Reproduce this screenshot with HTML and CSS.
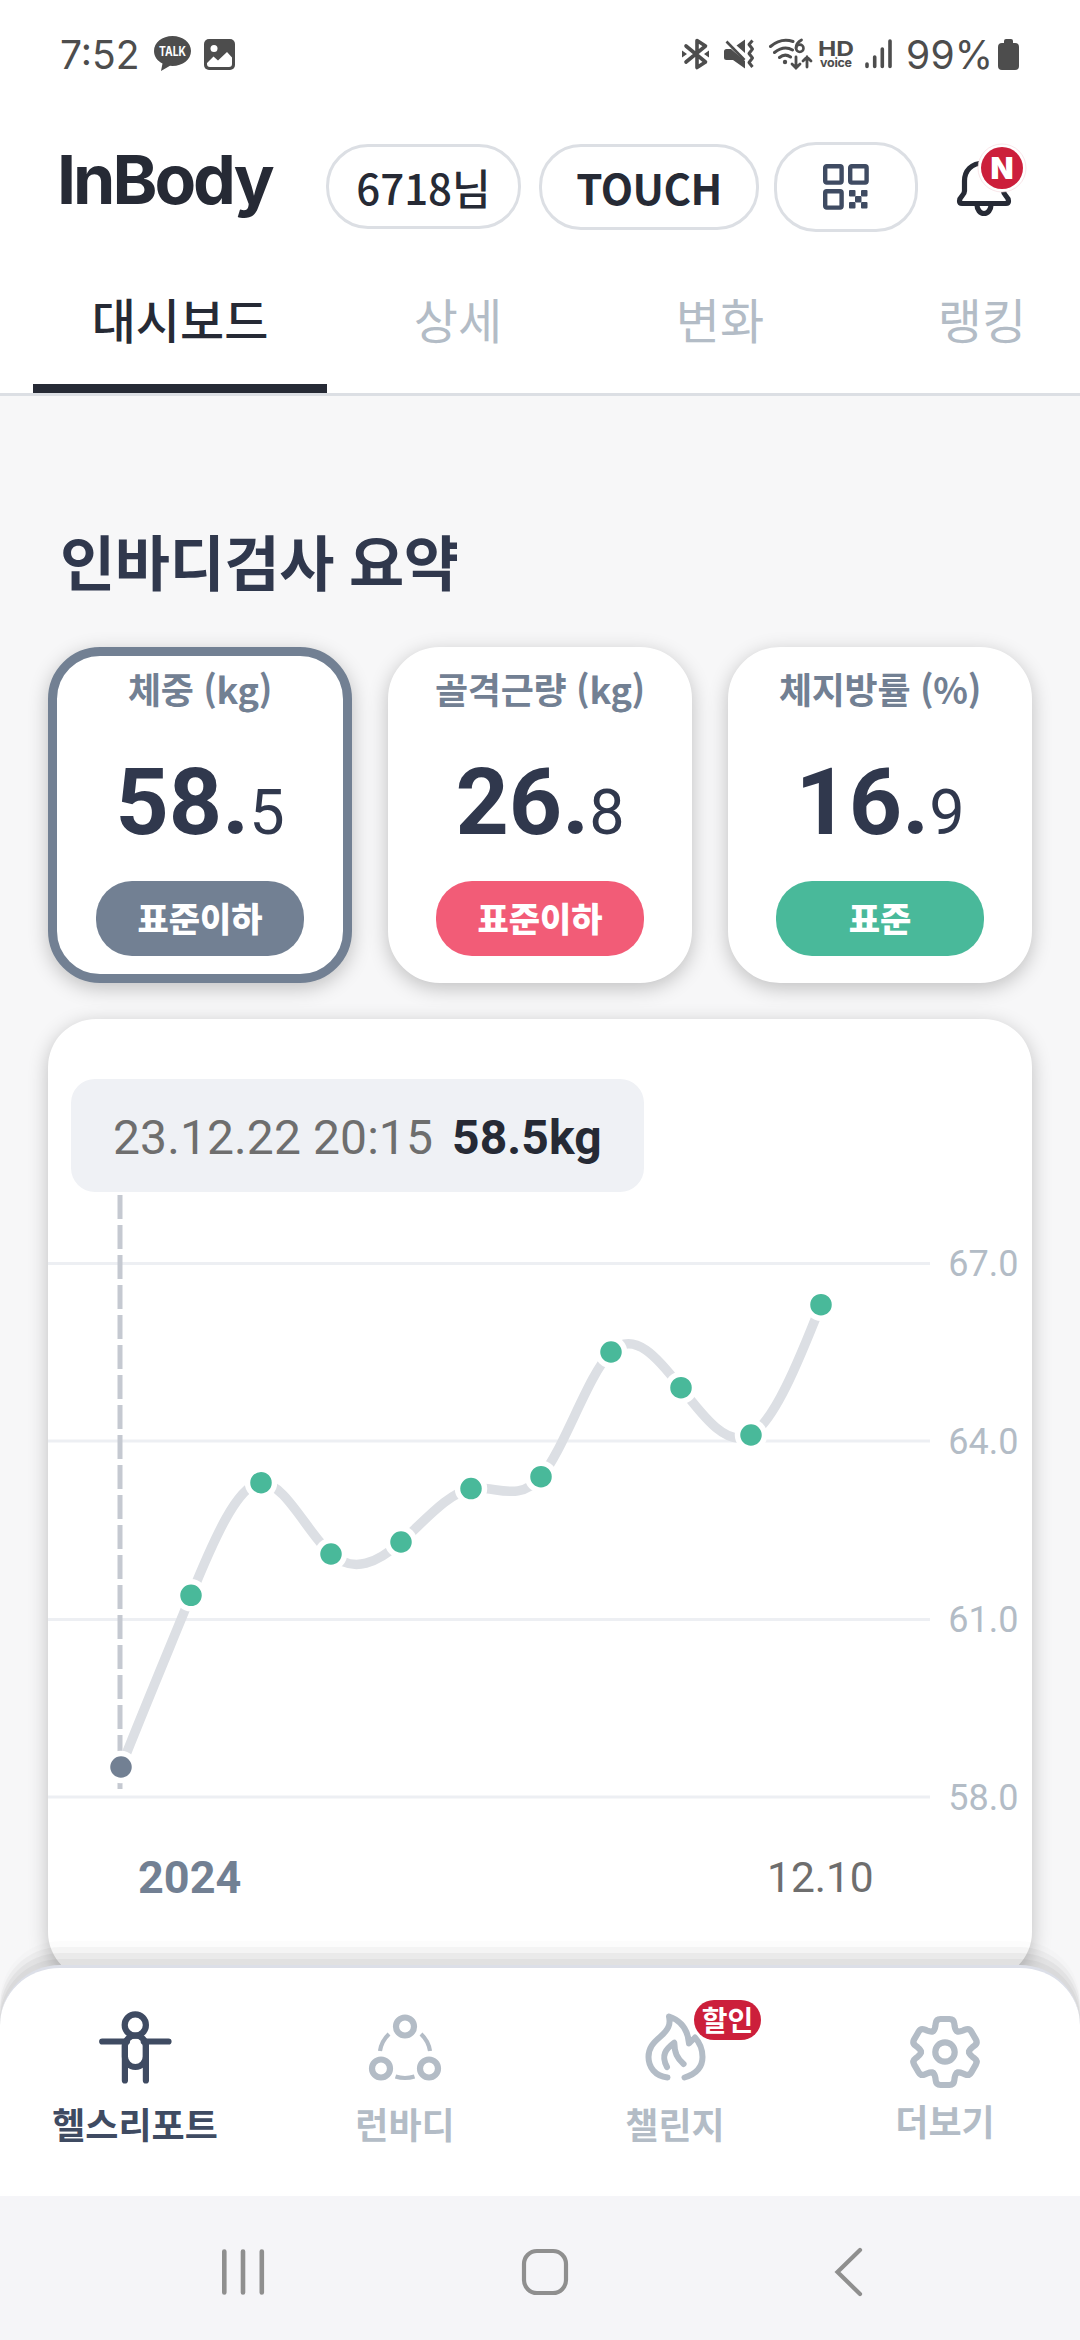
FILE: index.html
```html
<!DOCTYPE html>
<html lang="ko">
<head>
<meta charset="utf-8">
<title>InBody</title>
<link rel="stylesheet" href="styles.css">
</head>
<body>
<div class="screen">
  <div class="status">
    <span class="clock">7:52</span>
    <svg class="talk" width="37" height="36" viewBox="154 37 37 36">
      <path d="M172.500 37C182.700 37 191 43.500 191 52S182.700 67 172.500 67L170 66.800 161 72 162.500 64.500C157.500 62 154 57.500 154 52 154 43.500 162.300 37 172.500 37Z" fill="#4d4d4d"/>
      <text x="172.500" y="57" text-anchor="middle" textLength="27" lengthAdjust="spacingAndGlyphs" class="talk-text">TALK</text>
    </svg>
    <svg class="photo" width="31" height="31" viewBox="0 0 31 31">
      <rect width="31" height="31" rx="5" fill="#4d4d4d"/>
      <circle cx="10" cy="9.500" r="3.500" fill="#fff"/>
      <path d="M3 24 9.500 17.500 14 21.500 23 13 28 18.500V25Q28 28 25 28H6Q3 28 3 25Z" fill="#fff"/>
    </svg>
    <svg class="signals" width="212" height="36" viewBox="682 36 212 36">
      <g fill="none" stroke="#4d4d4d" stroke-width="3.600" stroke-linecap="round" stroke-linejoin="round">
        <path d="M686 46 705.500 62 697 67.500V40.500L705.500 46 686 62"/>
      </g>
      <path d="M682 50.500 687 54 682 57.500ZM709 50.500 704 54 709 57.500Z" fill="#4d4d4d"/>
      <path d="M724 51.500Q724 49 726.500 49H731L745 61V68.500L733 60H726.500Q724 60 724 57.500ZM736.500 45.500 745 39.500V53Z" fill="#4d4d4d"/>
      <path d="M726.500 41.500 744.500 60" stroke="#4d4d4d" stroke-width="2.600"/>
      <path d="M752.500 40.500 749 44.500 752.500 49 749 53.500 752.500 58 749 62.500 752.500 67" fill="none" stroke="#4d4d4d" stroke-width="3" stroke-linejoin="round"/>
      <g fill="none" stroke="#4d4d4d" stroke-width="3" stroke-linecap="round">
        <path d="M770.500 46.500Q781 37.500 793 41.500M774.500 52.500Q784 45 792.500 50M779.500 57.500Q785 53 790.500 57"/>
        <path d="M801.500 40Q796 43 796 48M796 57V67M792 64 796 68 800 64M807 67V57M803 61 807 57 811 61" stroke-width="2.800"/>
        <circle cx="799.800" cy="48.300" r="3.700" stroke-width="2.600"/>
      </g>
      <circle cx="785" cy="62" r="2.200" fill="#4d4d4d"/>
      <text x="818" y="56" textLength="36" lengthAdjust="spacingAndGlyphs" class="hd">HD</text>
      <text x="820" y="67" textLength="32" class="voice">voice</text>
      <path d="M867 64V66.500M874.700 57V66.500M882.300 49V66.500M890 41V66.500" stroke="#4d4d4d" stroke-width="3.600" stroke-linecap="round"/>
    </svg>
    <span class="percent">99%</span>
    <svg class="battery" width="21" height="31" viewBox="0 0 21 31"><path d="M6 4V2Q6 0 8 0H13Q15 0 15 2V4H17Q21 4 21 8V27Q21 31 17 31H4Q0 31 0 27V8Q0 4 4 4Z" fill="#4d4d4d"/></svg>
  </div>

  <header class="header">
    <div class="logo">InBody</div>
    <div class="pill pill-user">6718님</div>
    <div class="pill pill-touch">TOUCH</div>
    <div class="pill pill-qr">
      <svg width="46" height="46" viewBox="0 0 46 46" fill="#3f4b62">
        <g fill="none" stroke="#3f4b62" stroke-width="4.400">
          <rect x="2.200" y="2.200" width="16.400" height="16.400" rx="1.500"/>
          <rect x="27.200" y="2.200" width="16.400" height="16.400" rx="1.500"/>
          <rect x="2.200" y="27.200" width="16.400" height="16.400" rx="1.500"/>
        </g>
        <rect x="26" y="26" width="6.500" height="6.500" rx="1"/><rect x="38" y="26" width="6.500" height="6.500" rx="1"/>
        <rect x="32" y="32" width="6.500" height="6.500" rx="1"/>
        <rect x="26" y="38" width="6.500" height="6.500" rx="1"/><rect x="38" y="38" width="6.500" height="6.500" rx="1"/>
      </svg>
    </div>
    <svg class="bell" width="80" height="80" viewBox="950 140 80 80">
      <path d="M984 163C971 163 964.500 171 964.500 181V191C964.500 196 959.500 196 959.500 201Q959.500 203.500 962 203.500H1006Q1008.500 203.500 1008.500 201C1008.500 196 1003.500 196 1003.500 191V181C1003.500 171 997 163 984 163Z" fill="none" stroke="#262a35" stroke-width="5.200"/>
      <path d="M977 205A7 8.500 0 0 0 991 205" fill="none" stroke="#262a35" stroke-width="5.200"/>
      <circle cx="1002" cy="168" r="24" fill="#fff" stroke="#f3d5da" stroke-width=".6"/>
      <circle cx="1002" cy="168" r="21" fill="#cc1f3b"/>
      <text x="1002" y="179" text-anchor="middle" class="bell-n">N</text>
    </svg>
  </header>

  <nav class="tabs">
    <div class="tab tab-active">대시보드</div>
    <div class="tab">상세</div>
    <div class="tab">변화</div>
    <div class="tab">랭킹</div>
  </nav>

  <main class="main">
    <h1 class="title">인바디검사 요약</h1>
    <div class="cards">
      <section class="card card-active">
        <div class="card-label">체중 (kg)</div>
        <div class="value"><b>58.</b><span>5</span></div>
        <div class="grade grade-gray">표준이하</div>
      </section>
      <section class="card">
        <div class="card-label">골격근량 (kg)</div>
        <div class="value"><b>26.</b><span>8</span></div>
        <div class="grade grade-red">표준이하</div>
      </section>
      <section class="card">
        <div class="card-label">체지방률 (%)</div>
        <div class="value"><b>16.</b><span>9</span></div>
        <div class="grade grade-green">표준</div>
      </section>
    </div>
    <section class="chart">
      <div class="tooltip"><span>23.12.22 20:15</span><b>58.5kg</b></div>
      <svg class="plot" width="984" height="788" viewBox="48 1192 984 788">
        <path d="M48 1263.500H930M48 1441H930M48 1619.500H930M48 1797H930" stroke="#edeff3" stroke-width="3"/>
        <path d="M120 1195V1789" stroke="#c5c9d1" stroke-width="5" stroke-dasharray="24 6"/>
        <path d="M121 1767C144 1709 168 1651.600 191 1595.300S238 1484 261 1482.700 308 1533.800 331 1554 378 1562.300 401 1542 448 1493 471 1488.600 518 1504 541 1476.700 588 1374.900 611 1352 658 1357.800 681 1387.700 728 1448.600 751 1435 798 1363 821 1304.700" fill="none" stroke="#dcdfe4" stroke-width="9.500"/>
        <g fill="#49b99a" stroke="#fff" stroke-width="5.500">
          <circle cx="121" cy="1767" r="13.500" fill="#728093"/>
          <circle cx="191" cy="1595.300" r="13.500"/><circle cx="261" cy="1482.700" r="13.500"/>
          <circle cx="331" cy="1554" r="13.500"/><circle cx="401" cy="1542" r="13.500"/>
          <circle cx="471" cy="1488.600" r="13.500"/><circle cx="541" cy="1476.700" r="13.500"/>
          <circle cx="611" cy="1352" r="13.500"/><circle cx="681" cy="1387.700" r="13.500"/>
          <circle cx="751" cy="1435" r="13.500"/><circle cx="821" cy="1304.700" r="13.500"/>
        </g>
        <g class="axis-y" text-anchor="end">
          <text x="1018.500" y="1276">67.0</text><text x="1018.500" y="1454">64.0</text>
          <text x="1018.500" y="1632">61.0</text><text x="1018.500" y="1810">58.0</text>
        </g>
        <text x="138" y="1893" class="year">2024</text>
        <text x="767" y="1892" class="date">12.10</text>
      </svg>
    </section>
  </main>

  <nav class="bottom">
    <div class="item item-active">
      <svg width="80" height="80" viewBox="95 2008 80 80" fill="none" stroke="#3f4b62" stroke-width="6.200" stroke-linecap="round">
        <circle cx="135.300" cy="2025" r="10.600"/>
        <rect x="124.900" y="2035.500" width="21" height="31.500" rx="10.500"/>
        <path d="M102.200 2041.500H127M143.700 2041.500H168.500M124.900 2044V2080.500M145.900 2044V2080.500"/>
      </svg>
      <span>헬스리포트</span>
    </div>
    <div class="item">
      <svg width="80" height="80" viewBox="365 2008 80 80" fill="none" stroke="#b3bcc6" stroke-width="6.200">
        <circle cx="405" cy="2026.500" r="9"/><circle cx="381" cy="2068.500" r="9"/><circle cx="429" cy="2068.500" r="9"/>
        <path d="M380 2051Q381.500 2041 389 2034M430 2051Q428.500 2041 421 2034M395.500 2076.500Q405 2079.500 414.500 2076.500" stroke-width="4.200"/>
      </svg>
      <span>런바디</span>
    </div>
    <div class="item">
      <svg width="80" height="80" viewBox="635 2008 80 80" fill="none" stroke="#b3bcc6" stroke-width="6" stroke-linecap="round" stroke-linejoin="round">
        <path d="M667.500 2077.500C655 2076 648.500 2067 648.500 2057 648.500 2048 653 2043 660 2037 668 2030 671 2025 669 2016.500 682 2021 688 2030 689 2043.500L695 2037.500C700 2043 702.500 2050 702.500 2057 702.500 2067 696 2074 684.500 2077.500"/>
        <path d="M667 2067C660.500 2055 666 2049 674.300 2042.700 674.500 2053 677 2058 683.600 2064"/>
      </svg>
      <span>챌린지</span>
      <em class="sale">할인</em>
    </div>
    <div class="item item-more">
      <svg width="80" height="84" viewBox="905 2008 80 84" fill="none" stroke="#b3bcc6" stroke-width="6.200" stroke-linecap="round">
        <defs><path id="tooth" d="M-12-20.800C-10.500-21.700-10-23.500-9.600-26L-9.300-28.500Q-8.800-33-4.500-33H4.500Q8.800-33 9.300-28.500L9.600-26C10-23.500 10.500-21.700 12-20.800"/></defs>
        <g transform="translate(945 2052)">
          <use href="#tooth"/><use href="#tooth" transform="rotate(60)"/><use href="#tooth" transform="rotate(120)"/>
          <use href="#tooth" transform="rotate(180)"/><use href="#tooth" transform="rotate(240)"/><use href="#tooth" transform="rotate(300)"/>
          <circle r="9.700"/>
        </g>
      </svg>
      <span>더보기</span>
    </div>
  </nav>

  <div class="system">
    <svg width="46" height="50" viewBox="220 2247 46 50"><path d="M224.300 2251.500V2292.500M243 2251.500V2292.500M261.800 2251.500V2292.500" stroke="#8f8f8f" stroke-width="4.600" stroke-linecap="round"/></svg>
    <svg class="home" width="50" height="50" viewBox="520 2247 50 50"><rect x="524" y="2251" width="42" height="42" rx="13" fill="none" stroke="#8f8f8f" stroke-width="4.200"/></svg>
    <svg class="back" width="34" height="52" viewBox="831 2246 34 52"><path d="M860 2250 837.500 2272 860 2294" fill="none" stroke="#8f8f8f" stroke-width="4.200" stroke-linecap="round"/></svg>
  </div>
</div>
</body>
</html>
```
FILE: styles.css
```css
* { box-sizing: border-box; }
body { margin: 0; background: #fff; }
svg { display: block; flex: none; }

.screen {
  width: 1080px;
  height: 2340px;
  display: flex;
  flex-direction: column;
  overflow: hidden;
  background: #fff;
  font-family: "Noto Sans CJK KR", sans-serif;
}

/* Status bar */
.status {
  height: 108px;
  display: flex;
  align-items: center;
  padding: 0 61px 0 60px;
  color: #4d4d4d;
  font: 400 39px/1 "Inter", sans-serif;
  flex: none;
}
.clock { width: 94px; }
.photo { margin-left: 13px; }
.talk-text { font: 700 13px "Inter", sans-serif; fill: #fff; }
.signals { margin-left: auto; }
.hd { font: 700 20.500px "Inter", sans-serif; fill: #4d4d4d; }
.voice { font: 700 12.500px "Inter", sans-serif; fill: #4d4d4d; }
.percent { width: 90px; margin-left: 12px; letter-spacing: 0.2px; }
.battery { margin-left: 2px; }

/* Header */
.header {
  height: 157px;
  display: flex;
  align-items: center;
  padding-left: 57px;
  flex: none;
  color: #262a35;
}
.logo {
  width: 269px;
  padding-bottom: 15px;
  font: 700 68px/80px "Inter", sans-serif;
  letter-spacing: -3px;
}
.pill {
  display: flex;
  align-items: center;
  justify-content: center;
  border: 3px solid #dcdfe4;
  border-radius: 42px;
  font-size: 42px;
  line-height: 60px;
}
.pill-user { width: 195px; height: 85px; font-weight: 500; }
.pill-touch { width: 220px; height: 86px; margin-left: 18px; font-weight: 700; letter-spacing: -0.5px; }
.pill-qr { width: 144px; height: 90px; margin-left: 15px; }
.bell { margin-left: 32px; align-self: flex-start; margin-top: 32px; }
.bell-n { font: 900 30px "Inter", sans-serif; fill: #fff; }

/* Tabs */
.tabs {
  height: 131px;
  display: flex;
  padding-left: 33px;
  border-bottom: 3px solid #dcdfe4;
  flex: none;
}
.tab {
  width: 262px;
  flex: none;
  padding-top: 17px;
  text-align: center;
  font-size: 48px;
  line-height: 72px;
  color: #b3bcc6;
}
.tab-active {
  width: 294px;
  font-weight: 500;
  color: #262a35;
  border-bottom: 9px solid #262a35;
}

/* Dashboard */
.main {
  flex: 1;
  min-height: 0;
  overflow: hidden;
  padding: 124px 48px 0;
  background: #f7f7f8;
}
.title {
  margin: 0;
  padding-left: 12px;
  font-size: 60px;
  font-weight: 700;
  line-height: 80px;
  letter-spacing: -0.4px;
  word-spacing: -1.5px;
  color: #30384d;
}
.cards { display: flex; gap: 36px; margin-top: 47px; }
.card {
  width: 304px;
  height: 336px;
  display: flex;
  flex-direction: column;
  align-items: center;
  padding-top: 6px;
  background: #fff;
  border: 9px solid #fff;
  border-radius: 52px;
  box-shadow: 0 5px 20px rgba(0, 0, 0, .23);
}
.card-active { border-color: #728093; }
.card-label { font-size: 36px; font-weight: 700; line-height: 52px; letter-spacing: -0.3px; color: #728093; white-space: nowrap; }
.value {
  height: 110px;
  margin-top: 34px;
  display: flex;
  align-items: baseline;
  font-family: "Roboto", sans-serif;
  line-height: 110px;
  color: #30384d;
}
.value b { font-size: 93px; font-weight: 700; }
.value span { font-size: 63px; }
.grade {
  width: 208px;
  height: 75px;
  margin-top: 23px;
  border-radius: 36px;
  text-align: center;
  font-size: 34px;
  font-weight: 900;
  line-height: 73px;
  color: #fff;
}
.grade-gray { background: #728093; }
.grade-red { background: #f25c77; }
.grade-green { background: #49b99a; }

.chart {
  height: 961px;
  margin-top: 36px;
  padding-top: 60px;
  background: #fff;
  border-radius: 48px;
  box-shadow: 0 5px 20px rgba(0, 0, 0, .23);
}
.tooltip {
  width: 573px;
  height: 113px;
  margin-left: 23px;
  padding: 4px 0 0 42px;
  display: flex;
  align-items: center;
  gap: 19px;
  border-radius: 24px;
  background: #eff1f5;
  font: 400 48px/60px "Roboto", sans-serif;
  letter-spacing: 0.1px;
  color: #6e6e6e;
  white-space: nowrap;
}
.tooltip b { font-weight: 700; color: #262a35; }
.axis-y { font: 400 36px "Roboto", sans-serif; fill: #b3bcc6; }
.year { font: 700 45px "Roboto", sans-serif; fill: #728093; }
.date { font: 400 42.500px "Roboto", sans-serif; fill: #6e6e6e; }

/* Bottom navigation */
.bottom {
  position: relative;
  height: 231px;
  margin-top: -60px;
  display: flex;
  flex: none;
  background: #fff;
  border-top: 3px solid #dcdfe8;
  border-radius: 60px 60px 0 0;
  box-shadow:
    0 -6px 0 rgba(0, 0, 0, .035),
    0 -12px 0 rgba(0, 0, 0, .04),
    0 -18px 0 rgba(0, 0, 0, .03),
    0 -24px 0 rgba(0, 0, 0, .012);
}
.item {
  position: relative;
  width: 270px;
  display: flex;
  flex-direction: column;
  align-items: center;
  padding-top: 40px;
  font-size: 36px;
  font-weight: 700;
  line-height: 48px;
  color: #b3bcc6;
}
.item span { margin-top: 11px; }
.item-more span { margin-top: 4px; }
.item-active { color: #3f4b62; }
.sale {
  position: absolute;
  left: 154px;
  top: 32px;
  width: 67px;
  height: 40px;
  border-radius: 20px;
  background: #cc1f3b;
  color: #fff;
  font-size: 28px;
  font-style: normal;
  line-height: 38px;
  text-align: center;
}

/* System navigation */
.system {
  height: 144px;
  flex: none;
  display: flex;
  align-items: center;
  padding: 8px 0 0 220px;
  background: #f5f5f8;
}
.home { margin-left: 254px; }
.back { margin-left: 261px; }
```
